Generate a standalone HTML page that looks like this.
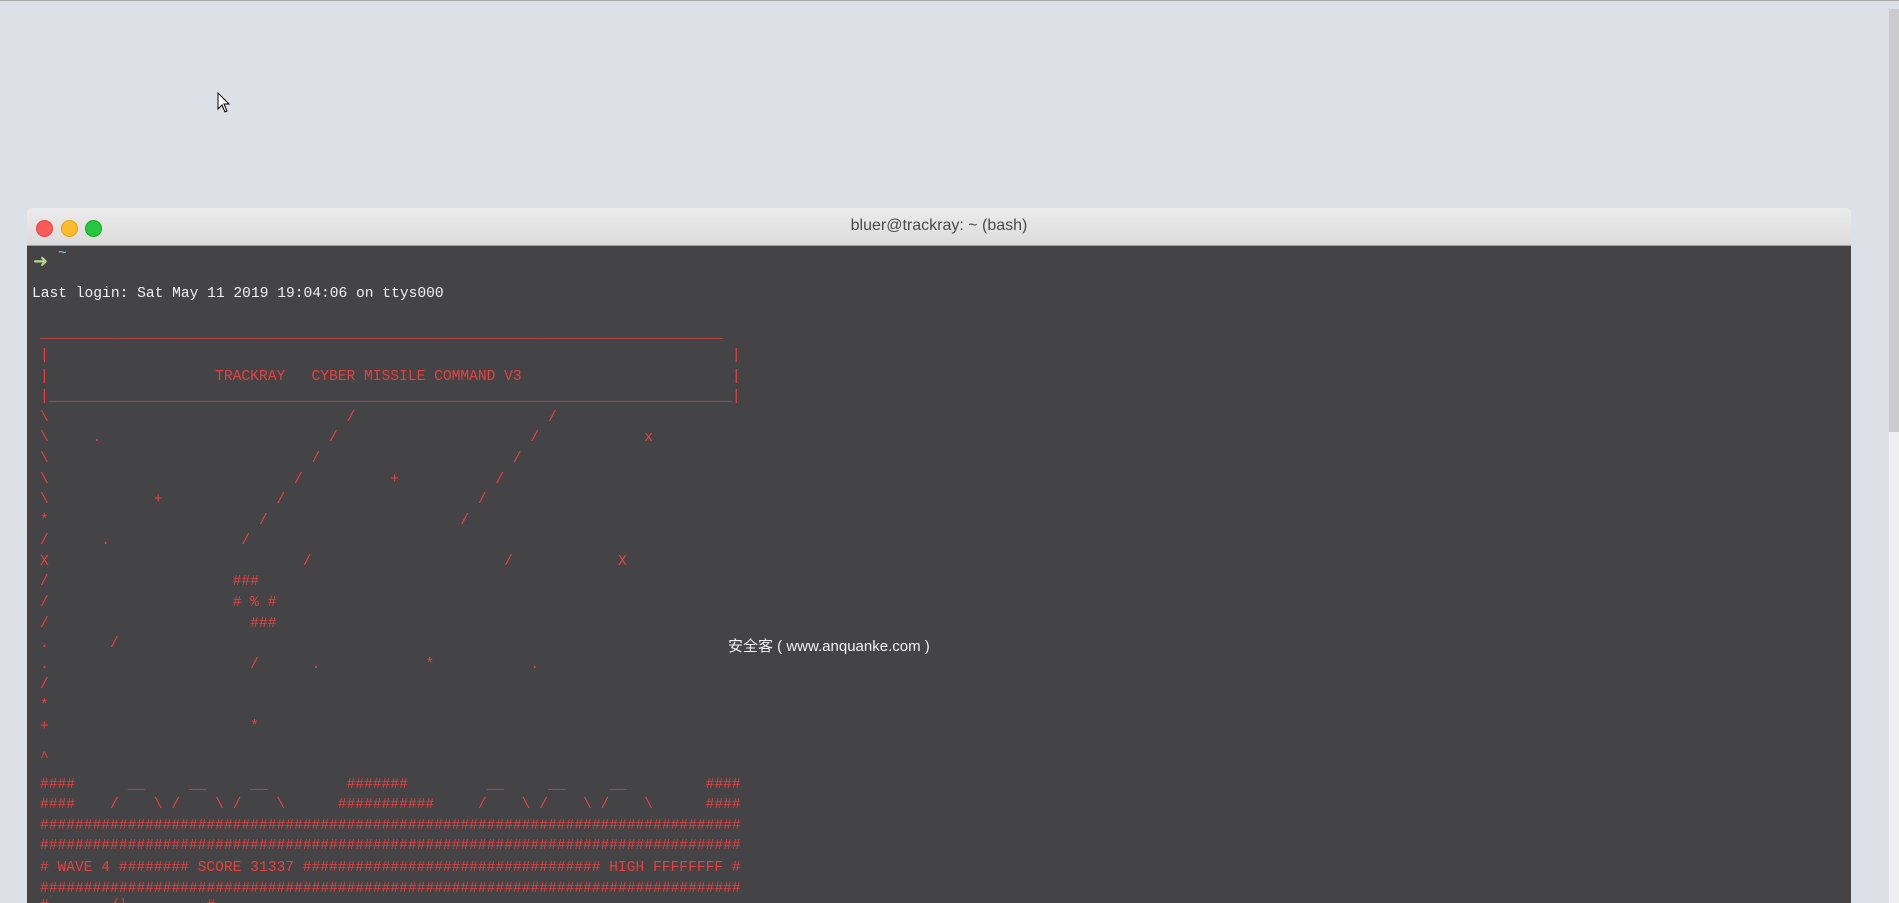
<!DOCTYPE html>
<html><head><meta charset="utf-8">
<style>
html,body{margin:0;padding:0;width:1899px;height:903px;overflow:hidden;}
body{background:#dde0e7;position:relative;font-family:"Liberation Sans",sans-serif;}
.topline{position:absolute;left:0;top:0;width:1899px;height:1px;background:#a8a8a8;}
.sb{position:absolute;left:1889px;top:9px;width:10px;height:423px;background:#cbcbcb;}
.sb2{position:absolute;left:1889px;top:432px;width:10px;height:471px;background:#efefef;}
.win{position:absolute;left:27px;top:208px;width:1824px;height:695px;overflow:hidden;}
.title{position:absolute;left:0;top:0;width:1824px;height:37px;background:linear-gradient(#ebebeb,#dcdcdc);border-radius:5px 5px 0 0;border-bottom:1px solid #a0a0a0;}
.title span{position:absolute;left:0;width:100%;text-align:center;top:3px;line-height:30px;font-size:16px;color:#4a4a4a;}
.dot{position:absolute;top:12px;width:15px;height:15px;border-radius:50%;}
.term{position:absolute;left:0;top:38px;width:1824px;height:657px;background:#444446;}
.m{position:absolute;font-family:"Liberation Mono",monospace;font-size:14.6px;line-height:20px;white-space:pre;color:#e8403f;}
.w{color:#f2f2f2;}
</style></head><body>
<div class="topline"></div>
<div class="sb"></div><div class="sb2"></div>
<svg style="position:absolute;left:217px;top:92px" width="14" height="22" viewBox="0 0 14 22"><path d="M1 1 L1 17 L5 13 L8 20 L10 19 L7 12 L12 12 Z" fill="#fff" stroke="#000" stroke-width="1"/></svg>
<div class="win">
<div class="title"><span>bluer@trackray: ~ (bash)</span>
<div class="dot" style="left:9px;background:#fc5b57;border:0.5px solid #e2463f"></div>
<div class="dot" style="left:34px;background:#febb2e;border:0.5px solid #e1a116"></div>
<div class="dot" style="left:58px;background:#27c63f;border:0.5px solid #12ac28"></div>
</div>
<div class="term"></div>
</div>
<div class="m" style="left:33px;top:252px;color:#b5d98a;font-size:18px;font-family:'DejaVu Sans',sans-serif;">➜</div>
<div class="m" style="left:58px;top:244px;color:#7fc8e8;">~</div>
<div class="m w" style="left:32px;top:284px;">Last login: Sat May 11 2019 19:04:06 on ttys000</div>

<div class="m" style="left:40px;top:324px;">______________________________________________________________________________</div>
<div class="m" style="left:40px;top:346px;">|                                                                              |</div>
<div class="m" style="left:40px;top:367px;">|                   TRACKRAY   CYBER MISSILE COMMAND V3                        |</div>
<div class="m" style="left:40px;top:387px;">|______________________________________________________________________________|</div>
<div class="m" style="left:40px;top:408px;">\                                  /                      /</div>
<div class="m" style="left:40px;top:428px;">\     .                          /                      /            x</div>
<div class="m" style="left:40px;top:449px;">\                              /                      /</div>
<div class="m" style="left:40px;top:470px;">\                            /          +           /</div>
<div class="m" style="left:40px;top:490px;">\            +             /                      /</div>
<div class="m" style="left:40px;top:511px;">*                        /                      /</div>
<div class="m" style="left:40px;top:531px;">/      .               /</div>
<div class="m" style="left:40px;top:552px;">X                             /                      /            X</div>
<div class="m" style="left:40px;top:572px;">/                     ###</div>
<div class="m" style="left:40px;top:593px;">/                     # % #</div>
<div class="m" style="left:40px;top:614px;">/                       ###</div>
<div class="m" style="left:40px;top:634px;">.       /</div>
<div class="m" style="left:40px;top:655px;">.                       /      .            *           .</div>
<div class="m" style="left:40px;top:675px;">/</div>
<div class="m" style="left:40px;top:696px;">*</div>
<div class="m" style="left:40px;top:717px;">+                       *</div>
<div class="m" style="left:40px;top:748px;">^</div>
<div class="m" style="left:40px;top:775px;">####      __     __     __         #######         __     __     __         ####</div>
<div class="m" style="left:40px;top:795px;">####    /    \ /    \ /    \      ###########     /    \ /    \ /    \      ####</div>
<div class="m" style="left:40px;top:816px;">################################################################################</div>
<div class="m" style="left:40px;top:836px;">################################################################################</div>
<div class="m" style="left:40px;top:858px;"># WAVE 4 ######## SCORE 31337 ################################## HIGH FFFFFFFF #</div>
<div class="m" style="left:40px;top:879px;">################################################################################</div>
<div class="m" style="left:40px;top:896px;">#       /|         #</div>

<div style="position:absolute;left:728px;top:637px;font-size:15px;line-height:20px;color:#f2f2f2;font-family:'Liberation Sans','Noto Sans CJK SC',sans-serif;white-space:pre;">安全客 ( www.anquanke.com )</div>
</body></html>
